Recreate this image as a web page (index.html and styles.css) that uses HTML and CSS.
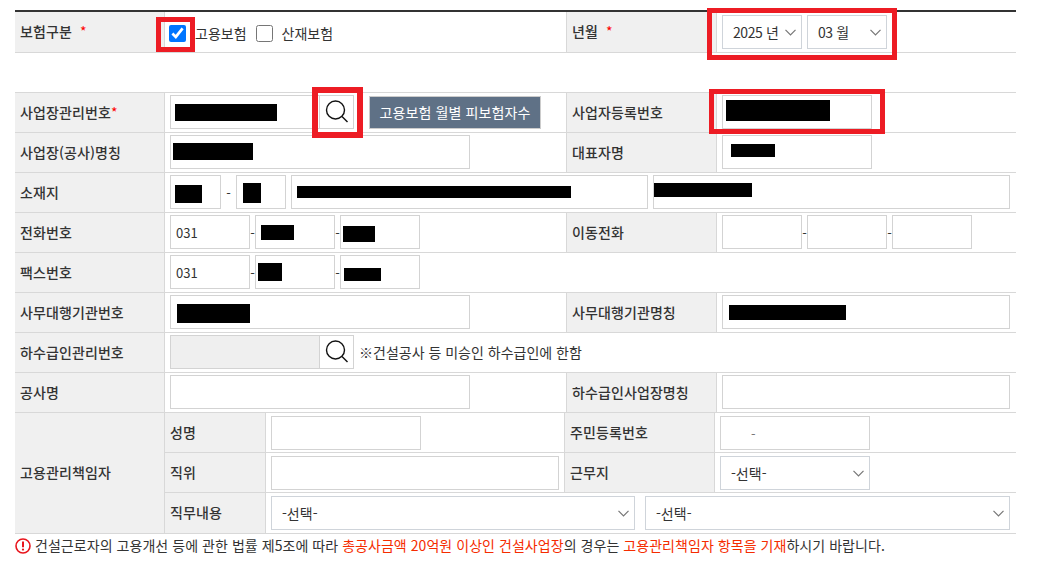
FILE: index.html
```html
<!DOCTYPE html>
<html lang="ko">

<head>
  <meta charset="UTF-8">
  <title>보험관계 신고</title>
  <link rel="stylesheet" href="styles.css">
</head>

<body>
  <div class="page">
    <form class="report-form" onsubmit="return false;">

      <table class="form-table top-table">
        <colgroup>
          <col class="c-label"><col class="c-main"><col class="c-label2"><col class="c-side">
        </colgroup>
        <tr>
          <th>보험구분 &nbsp;<span class="req">*</span></th>
          <td>
            <div class="line check-line">
              <input type="checkbox" id="ins1" checked>
              <label for="ins1">고용보험</label>
              <input type="checkbox" id="ins2">
              <label for="ins2">산재보험</label>
            </div>
          </td>
          <th class="mid">년월 &nbsp;<span class="req">*</span></th>
          <td>
            <div class="line">
              <select class="w80 date-select"><option>2025 년</option></select>
              <select class="w80 date-select"><option>03 월</option></select>
            </div>
          </td>
        </tr>
      </table>

      <table class="form-table main-table">
        <colgroup>
          <col class="c-label"><col class="c-main"><col class="c-label2"><col class="c-side">
        </colgroup>
        <tr>
          <th>사업장관리번호<span class="req">*</span></th>
          <td>
            <div class="line joined">
              <div class="field">
                <input type="text" class="w150">
                <span class="mask m-manage"></span>
              </div>
              <button type="button" class="search-btn">
                <svg width="24" height="24" viewBox="0 0 24 24"><circle cx="10.5" cy="10" r="9" fill="none" stroke="#111" stroke-width="1.4"/><path d="M17 16.5 22.5 22" fill="none" stroke="#111" stroke-width="1.4"/></svg>
              </button>
              <button type="button" class="month-btn">고용보험 월별 피보험자수</button>
            </div>
          </td>
          <th class="mid">사업자등록번호</th>
          <td>
            <div class="field">
              <input type="text" class="w150">
              <span class="mask m-bizno"></span>
            </div>
          </td>
        </tr>
        <tr>
          <th>사업장(공사)명칭</th>
          <td>
            <div class="field">
              <input type="text" class="w300">
              <span class="mask m-name"></span>
            </div>
          </td>
          <th class="mid">대표자명</th>
          <td>
            <div class="field">
              <input type="text" class="w150">
              <span class="mask m-ceo"></span>
            </div>
          </td>
        </tr>
        <tr>
          <th>소재지</th>
          <td colspan="3">
            <div class="line">
              <div class="field">
                <input type="text" class="w51">
                <span class="mask m-zip1"></span>
              </div>
              <span class="dash">-</span>
              <div class="field">
                <input type="text" class="w50">
                <span class="mask m-zip2"></span>
              </div>
              <div class="field">
                <input type="text" class="w357">
                <span class="mask m-addr1"></span>
              </div>
              <div class="field">
                <input type="text" class="w357">
                <span class="mask m-addr2"></span>
              </div>
            </div>
          </td>
        </tr>
        <tr>
          <th>전화번호</th>
          <td>
            <div class="line tight">
              <input type="text" class="w80" value="031">
              <span class="dash">-</span>
              <div class="field">
                <input type="text" class="w80">
                <span class="mask m-tel1"></span>
              </div>
              <span class="dash">-</span>
              <div class="field">
                <input type="text" class="w80">
                <span class="mask m-tel2"></span>
              </div>
            </div>
          </td>
          <th class="mid">이동전화</th>
          <td>
            <div class="line tight">
              <input type="text" class="w80">
              <span class="dash">-</span>
              <input type="text" class="w80">
              <span class="dash">-</span>
              <input type="text" class="w80">
            </div>
          </td>
        </tr>
        <tr>
          <th>팩스번호</th>
          <td colspan="3">
            <div class="line tight">
              <input type="text" class="w80" value="031">
              <span class="dash">-</span>
              <div class="field">
                <input type="text" class="w80">
                <span class="mask m-fax1"></span>
              </div>
              <span class="dash">-</span>
              <div class="field">
                <input type="text" class="w80">
                <span class="mask m-fax2"></span>
              </div>
            </div>
          </td>
        </tr>
        <tr>
          <th>사무대행기관번호</th>
          <td>
            <div class="field">
              <input type="text" class="w300">
              <span class="mask m-agency1"></span>
            </div>
          </td>
          <th class="mid">사무대행기관명칭</th>
          <td>
            <div class="field">
              <input type="text" class="w288">
              <span class="mask m-agency2"></span>
            </div>
          </td>
        </tr>
        <tr>
          <th>하수급인관리번호</th>
          <td colspan="3">
            <div class="line joined">
              <input type="text" class="w150 locked" disabled>
              <button type="button" class="search-btn">
                <svg width="24" height="24" viewBox="0 0 24 24"><circle cx="10.5" cy="10" r="9" fill="none" stroke="#111" stroke-width="1.4"/><path d="M17 16.5 22.5 22" fill="none" stroke="#111" stroke-width="1.4"/></svg>
              </button>
              <span class="hint">※건설공사 등 미승인 하수급인에 한함</span>
            </div>
          </td>
        </tr>
        <tr>
          <th>공사명</th>
          <td><input type="text" class="w300"></td>
          <th class="mid">하수급인사업장명칭</th>
          <td><input type="text" class="w288"></td>
        </tr>
      </table>

      <table class="form-table manager-table">
        <colgroup>
          <col class="m-c1"><col class="m-c2"><col class="m-c3"><col class="m-c4"><col class="m-c5">
        </colgroup>
        <tr>
          <th rowspan="3">고용관리책임자</th>
          <th>성명</th>
          <td><input type="text" class="w150"></td>
          <th class="mid">주민등록번호</th>
          <td><input type="text" class="w150 rrn" value="-"></td>
        </tr>
        <tr>
          <th>직위</th>
          <td><input type="text" class="w288"></td>
          <th class="mid">근무지</th>
          <td><select class="w150"><option>-선택-</option></select></td>
        </tr>
        <tr class="last-row">
          <th>직무내용</th>
          <td colspan="3">
            <div class="line gap10">
              <select class="w364"><option>-선택-</option></select>
              <select class="w365"><option>-선택-</option></select>
            </div>
          </td>
        </tr>
      </table>

      <p class="notice">
        <svg width="16" height="16" viewBox="0 0 16 16"><circle cx="8" cy="8" r="7" fill="none" stroke="#e8141c" stroke-width="1.6"/><path d="M8 3.6V9.2" stroke="#e8141c" stroke-width="2"/><circle cx="8" cy="11.6" r="1.1" fill="#e8141c"/></svg>
        <span>건설근로자의 고용개선 등에 관한 법률 제5조에 따라 <em>총공사금액 20억원 이상인 건설사업장</em>의 경우는 <em>고용관리책임자 항목을 기재</em>하시기 바랍니다.</span>
      </p>
    </form>

    <!-- red marks drawn on top of the capture -->
    <div class="mark mark-check"></div>
    <div class="mark mark-date"></div>
    <div class="mark mark-search"></div>
    <div class="mark mark-bizno"></div>
  </div>
</body>

</html>
```

FILE: styles.css
```css
* {
  box-sizing: border-box;
}

body {
  margin: 0;
  background-color: white;
  font-family: "Noto Sans CJK KR", "Noto Sans", sans-serif;
  font-size: 14px;
  color: #333;
}

.page {
  position: relative;
  height: 563px;
  overflow: hidden;
  padding: 10px 0 0 15px;
}

.report-form {
  width: 1001px;
}

/* tables */
.form-table {
  width: 1001px;
  table-layout: fixed;
  border-collapse: separate;
  border-spacing: 0;
}

.top-table {
  border-top: 2px solid #333;
  margin-bottom: 39px;
}

.main-table {
  border-top: 1px solid #d8d8d8;
}

.c-label { width: 150px; }
.c-main { width: 401px; }
.c-label2 { width: 151px; }
.c-side { width: 299px; }

.m-c1 { width: 150px; }
.m-c2 { width: 101px; }
.m-c3 { width: 298px; }
.m-c4 { width: 151px; }
.m-c5 { width: 301px; }

.form-table th,
.form-table td {
  height: 40px;
  border-bottom: 1px solid #d8d8d8;
  padding: 2px 5px 3px;
}

.form-table th {
  background-color: #f0f0f0;
  border-right: 1px solid #d8d8d8;
  padding: 0 5px 2px;
  font-weight: 500;
  letter-spacing: 0.1px;
  text-align: left;
  color: #333;
}

.form-table th.mid {
  border-left: 1px solid #d8d8d8;
}

.top-table th,
.top-table td {
  height: 41px;
}

.top-table td {
  padding: 3px 5px;
}

.manager-table td {
  padding: 3px 5px 2px;
  vertical-align: top;
}

.last-row th,
.last-row td {
  height: 41px;
}

.req {
  color: #f00;
  font-weight: 400;
}

/* inputs */
input[type="text"],
select {
  display: block;
  height: 34px;
  margin: 0;
  border: 1px solid #d3d3d3;
  border-radius: 0;
  background-color: white;
  padding: 0 5px;
  font-family: inherit;
  font-size: 13px;
  color: #333;
  outline: none;
}

select {
  appearance: none;
  padding: 0 20px 0 10px;
  font-size: 14px;
  border-color: #cfd4da;
  background-image: url("data:image/svg+xml,%3Csvg xmlns='http://www.w3.org/2000/svg' width='11' height='7' viewBox='0 0 11 7'%3E%3Cpath d='M.5.8 5.5 6 10.5.8' fill='none' stroke='%23777' stroke-width='1.2'/%3E%3C/svg%3E");
  background-repeat: no-repeat;
  background-position: right 5px center;
}

.date-select {
  letter-spacing: -0.4px;
}

.w50 { width: 50px; }
.w51 { width: 51px; }
.w80 { width: 80px; }
.w150 { width: 150px; }
.w288 { width: 288px; }
.w300 { width: 300px; }
.w357 { width: 357px; }
.w364 { width: 364px; }
.w365 { width: 365px; }

input[type="text"].locked {
  background-color: #efefef;
}

input[type="text"].rrn {
  padding-left: 30px;
  color: #777;
}

input[type="checkbox"] {
  width: 17px;
  height: 17px;
  margin: 0;
  flex: none;
}

/* rows inside a cell */
.line {
  display: flex;
  align-items: center;
  gap: 5px;
}

.line.tight,
.line.joined {
  gap: 0;
}

.line.gap10 {
  gap: 10px;
}

.check-line {
  margin-left: -1px;
  padding-top: 2px;
  gap: 9px;
}

.dash {
  width: 5px;
  flex: none;
  display: flex;
  justify-content: center;
  font-size: 13px;
}

.hint {
  margin-left: 5px;
}

/* black boxes over the hidden values */
.field {
  position: relative;
  flex: none;
}

.mask {
  position: absolute;
  background-color: black;
}

.m-manage { left: 5px; top: 9px; width: 102px; height: 17px; }
.m-name { left: 3px; top: 8px; width: 80px; height: 17px; }
.m-bizno { left: 4px; top: 5px; width: 104px; height: 21px; }
.m-ceo { left: 9px; top: 9px; width: 44px; height: 13px; }
.m-zip1 { left: 5px; top: 10px; width: 27px; height: 18px; }
.m-zip2 { left: 7px; top: 8px; width: 18px; height: 20px; }
.m-addr1 { left: 6px; top: 11px; width: 274px; height: 12px; }
.m-addr2 { left: 1px; top: 8px; width: 98px; height: 14px; }
.m-tel1 { left: 6px; top: 10px; width: 33px; height: 15px; }
.m-tel2 { left: 3px; top: 11px; width: 32px; height: 16px; }
.m-fax1 { left: 3px; top: 8px; width: 24px; height: 18px; }
.m-fax2 { left: 4px; top: 13px; width: 37px; height: 13px; }
.m-agency1 { left: 7px; top: 9px; width: 73px; height: 19px; }
.m-agency2 { left: 7px; top: 10px; width: 117px; height: 15px; }

/* buttons */
.search-btn {
  width: 35px;
  height: 34px;
  margin-left: -1px;
  flex: none;
  display: flex;
  align-items: center;
  justify-content: center;
  border: 1px solid #d3d3d3;
  background-color: white;
  padding: 0;
}

.month-btn {
  width: 172px;
  height: 33px;
  margin-left: 15px;
  border: 1px solid #ccc;
  background-color: #5f7186;
  color: white;
  font-family: inherit;
  font-size: 14px;
  letter-spacing: 0.1px;
  padding: 0;
}

/* note under the form */
.notice {
  display: flex;
  align-items: center;
  gap: 4px;
  margin: 2px 0 0;
  font-size: 14px;
  line-height: 19px;
  letter-spacing: 0.05px;
  white-space: nowrap;
}

.notice em {
  font-style: normal;
  color: #f52c00;
}

/* red marks */
.mark {
  position: absolute;
  border: 5px solid #ed1c24;
}

.mark-check { left: 156px; top: 17px; width: 39px; height: 35px; }
.mark-date { left: 707px; top: 8px; width: 190px; height: 52px; }
.mark-search { left: 312px; top: 87px; width: 51px; height: 51px; border-width: 6px; }
.mark-bizno { left: 709px; top: 89px; width: 176px; height: 45px; }
```
